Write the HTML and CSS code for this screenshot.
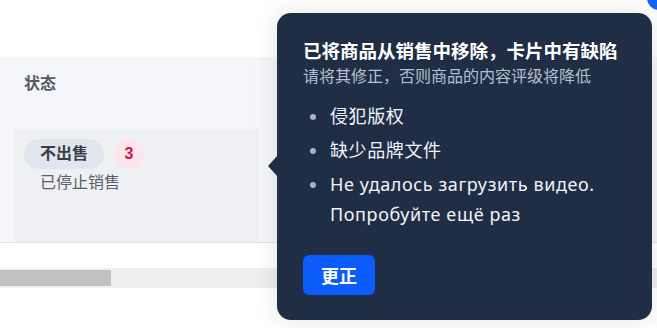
FILE: index.html
```html
<!DOCTYPE html>
<html lang="zh">

<head>
    <meta charset="UTF-8">
    <title>状态</title>
    <link rel="stylesheet" href="styles.css">
</head>

<body>

    <div class="topbar"></div>

    <section class="tabel">
        <div class="hoved">
            <span class="kolonne">状态</span>
        </div>
        <div class="raekke">
            <div class="celle">
                <div class="status">
                    <span class="pille">不出售</span>
                    <span class="taeller">3</span>
                </div>
                <p class="undertekst">已停止销售</p>
            </div>
        </div>
    </section>

    <div class="scrollbar">
        <div class="thumb"></div>
    </div>

    <span class="prik"></span>

    <aside class="tooltip">
        <h2>已将商品从销售中移除，卡片中有缺陷</h2>
        <p class="sub">请将其修正，否则商品的内容评级将降低</p>
        <ul>
            <li>侵犯版权</li>
            <li>缺少品牌文件</li>
            <li>Не удалось загрузить видео.<br>Попробуйте ещё раз</li>
        </ul>
        <button>更正</button>
    </aside>

</body>

</html>
```

FILE: styles.css
```css
body {
    margin: 0;
    width: 657px;
    height: 328px;
    overflow: hidden;
    position: relative;
    background-color: #fff;
    font-family: "Liberation Sans", "Noto Sans CJK SC", sans-serif;
}

.topbar {
    height: 57px;
}

.tabel {
    background-color: #f5f6f9;
    border-bottom: 1px solid #e2e4e8;
}

.hoved {
    height: 72px;
    box-sizing: border-box;
    padding: 16px 0 0 24px;
}

.kolonne {
    font-size: 16px;
    line-height: 22px;
    font-weight: bold;
    color: #555a63;
}

.raekke {
    height: 113px;
    display: flex;
}

.celle {
    margin-left: 14px;
    width: 234px;
    padding: 10px 0 0 10px;
    background-color: #eef0f4;
}

.status {
    display: flex;
    align-items: center;
    gap: 10px;
}

.pille {
    height: 30px;
    line-height: 30px;
    padding: 0 16px;
    border-radius: 15px;
    background-color: #e1e6ee;
    font-size: 16px;
    font-weight: bold;
    color: #3a3f47;
}

.taeller {
    width: 30px;
    height: 30px;
    line-height: 30px;
    border-radius: 50%;
    text-align: center;
    background-color: #fce6ec;
    color: #d0134d;
    font-size: 16px;
    font-weight: bold;
}

.undertekst {
    margin: 3px 0 0 16px;
    font-size: 16px;
    line-height: 22px;
    color: #5a5f68;
}

.scrollbar {
    margin-top: 25px;
    height: 20px;
    padding: 2px 0;
    box-sizing: border-box;
    background-color: #efefef;
}

.thumb {
    width: 111px;
    height: 100%;
    background-color: #c1c1c1;
}

.prik {
    position: absolute;
    top: -14px;
    right: -14px;
    width: 24px;
    height: 24px;
    border-radius: 50%;
    background-color: #1463f3;
}

.tooltip {
    position: absolute;
    left: 277px;
    top: 13px;
    width: 375px;
    height: 307px;
    box-sizing: border-box;
    padding: 26px 26px 24px;
    border-radius: 14px;
    background-color: #1f2d45;
    box-shadow: 0 0 24px rgba(30, 40, 60, 0.12);
    color: #f2f4f7;
}

.tooltip::before {
    content: "";
    position: absolute;
    left: -9px;
    top: 142px;
    border-top: 11px solid transparent;
    border-bottom: 11px solid transparent;
    border-right: 10px solid #1f2d45;
}

.tooltip h2 {
    margin: 0;
    font-size: 18.5px;
    line-height: 26px;
    font-weight: bold;
    color: #fff;
    white-space: nowrap;
}

.tooltip .sub {
    margin: 0;
    font-size: 16px;
    line-height: 24px;
    color: #b9c0cc;
    white-space: nowrap;
}

.tooltip ul {
    list-style: none;
    margin: 12px 0 0;
    padding: 0;
}

.tooltip li {
    position: relative;
    padding-left: 27px;
    margin-bottom: 4px;
    font-family: "Noto Sans", "Noto Sans CJK SC", sans-serif;
    font-size: 18px;
    line-height: 30px;
    letter-spacing: 0.6px;
}

.tooltip li::before {
    content: "";
    position: absolute;
    left: 7px;
    top: 13px;
    width: 6px;
    height: 6px;
    border-radius: 50%;
    background-color: #aab2bf;
}

.tooltip button {
    margin-top: 22px;
    height: 40px;
    padding: 0 18px;
    border: none;
    border-radius: 6px;
    background-color: #0b5cfb;
    color: #fff;
    font-family: "Noto Sans CJK SC", sans-serif;
    font-size: 18px;
    font-weight: bold;
    cursor: pointer;
}
```
